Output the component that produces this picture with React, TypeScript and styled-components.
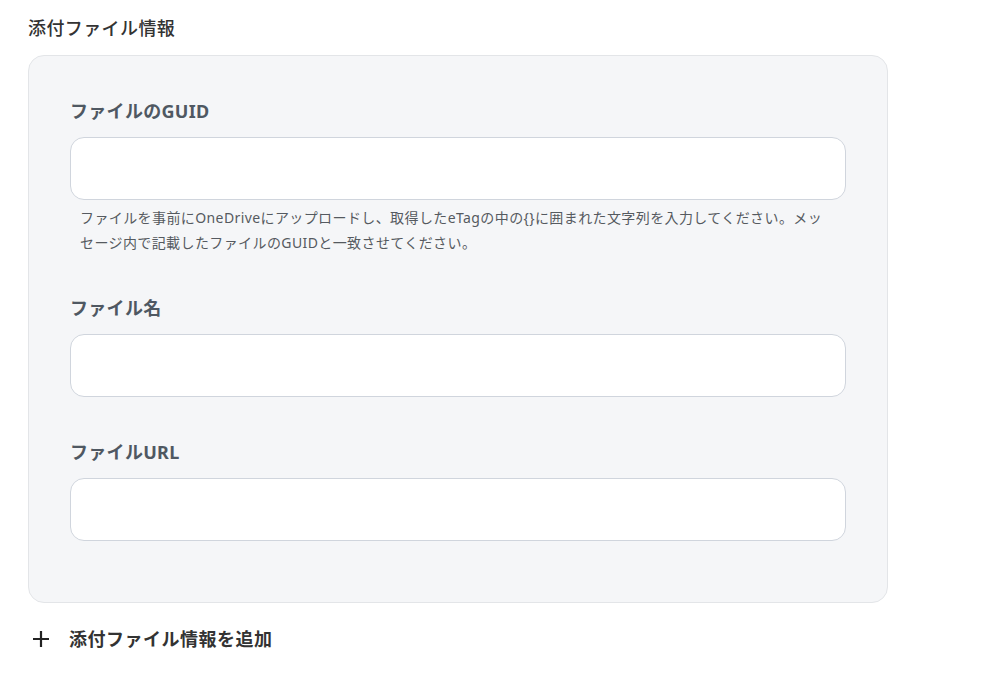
import * as React from 'react'
import styled, { createGlobalStyle } from 'styled-components'

const GlobalStyle = createGlobalStyle`
  body {
    margin: 0;
    background: #ffffff;
    font-family: "Noto Sans", "Noto Sans CJK JP", sans-serif;
    color: #333333;
  }
`

const Page = styled.div`
  width: 860px;
  padding: 14px 0 0 28px;
`

const SectionTitle = styled.h2`
  margin: 0 0 13px;
  font-size: 18px;
  line-height: 28px;
  font-weight: 500;
  letter-spacing: 0.4px;
  color: #333333;
`

const Card = styled.div`
  box-sizing: border-box;
  background: #f5f6f8;
  border: 1px solid #e3e5e8;
  border-radius: 16px;
  padding: 43px 41px 61px;
  display: flex;
  flex-direction: column;
  gap: 43px;
`

const Field = styled.div`
  display: flex;
  flex-direction: column;
`

const Label = styled.label`
  font-size: 18px;
  line-height: 24px;
  font-weight: 700;
  letter-spacing: 0.3px;
  color: #4f5862;
  margin-bottom: 14px;
`

const Input = styled.input`
  box-sizing: border-box;
  height: 63px;
  width: 100%;
  border: 1px solid #d0d5dd;
  border-radius: 14px;
  background: #ffffff;
  padding: 0 16px;
  font: inherit;
  outline: none;
`

const Help = styled.p`
  margin: 5px 16px -2px 10px;
  font-size: 14px;
  line-height: 25px;
  letter-spacing: 0.4px;
  color: #555a60;
`

const AddButton = styled.button`
  display: flex;
  align-items: center;
  gap: 19px;
  margin: 24px 0 0 4px;
  padding: 0;
  border: none;
  background: none;
  font: inherit;
  font-size: 18px;
  line-height: 24px;
  font-weight: 700;
  letter-spacing: 0.5px;
  color: #333333;
  cursor: pointer;
`

const PlusIcon = () => (
  <svg width="18" height="18" viewBox="0 0 18 18">
    <path d="M9 1v16M1 9h16" stroke="#222" strokeWidth="2.2" />
  </svg>
)

const fields = [
  {
    label: 'ファイルのGUID',
    help: 'ファイルを事前にOneDriveにアップロードし、取得したeTagの中の{}に囲まれた文字列を入力してください。メッセージ内で記載したファイルのGUIDと一致させてください。',
  },
  { label: 'ファイル名' },
  { label: 'ファイルURL' },
]

export default function App() {
  return (
    <Page>
      <GlobalStyle />
      <SectionTitle>添付ファイル情報</SectionTitle>
      <Card>
        {fields.map(f => (
          <Field key={f.label}>
            <Label>{f.label}</Label>
            <Input type="text" />
            {f.help && <Help>{f.help}</Help>}
          </Field>
        ))}
      </Card>
      <AddButton>
        <PlusIcon />
        添付ファイル情報を追加
      </AddButton>
    </Page>
  )
}
